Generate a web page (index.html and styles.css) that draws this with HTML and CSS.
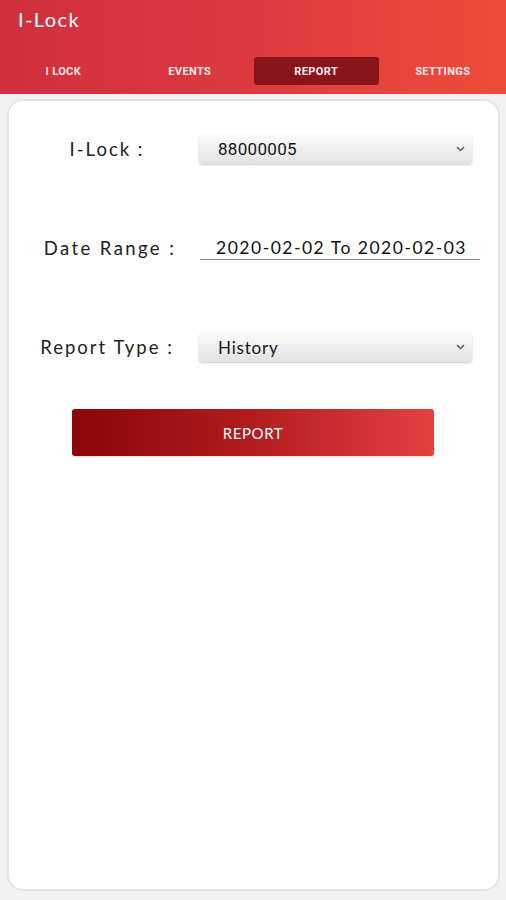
FILE: index.html
```html
<!DOCTYPE html>
<html>
<head>
<meta charset="utf-8">
<link rel="stylesheet" href="styles.css">
</head>
<body>
<header class="appbar">
  <div class="title">I-Lock</div>
  <nav class="tabs">
    <div class="tab">I LOCK</div>
    <div class="tab">EVENTS</div>
    <div class="tab active">REPORT</div>
    <div class="tab">SETTINGS</div>
  </nav>
</header>
<main class="card">
  <div class="row">
    <div class="label">I-Lock :</div>
    <div class="select">
      <span class="value">88000005</span>
      <svg class="chev" width="9" height="6" viewBox="0 0 9 6"><path d="M1 1.2 L4.5 4.5 L8 1.2" fill="none" stroke="#666" stroke-width="1.6"/></svg>
    </div>
  </div>
  <div class="row">
    <div class="label">Date Range :</div>
    <div class="date">2020-02-02 To 2020-02-03</div>
  </div>
  <div class="row">
    <div class="label">Report Type :</div>
    <div class="select">
      <span class="value geo">History</span>
      <svg class="chev" width="9" height="6" viewBox="0 0 9 6"><path d="M1 1.2 L4.5 4.5 L8 1.2" fill="none" stroke="#666" stroke-width="1.6"/></svg>
    </div>
  </div>
  <div class="btnwrap">
    <button class="btn">REPORT</button>
  </div>
</main>
</body>
</html>
```
FILE: styles.css
```css
html, body {
  margin: 0;
  padding: 0;
  height: 100%;
}
body {
  background: #f2f2f2;
  display: flex;
  flex-direction: column;
  font-family: "Lato", "DejaVu Sans", sans-serif;
}
.appbar {
  height: 94px;
  flex: none;
  background: linear-gradient(90deg, #cf2f3d 0%, #dd3a40 50%, #ef4c3b 100%);
  display: flex;
  flex-direction: column;
  box-sizing: border-box;
}
.title {
  color: #fff;
  font-size: 20px;
  padding: 7px 0 0 18px;
  height: 57px;
  box-sizing: border-box;
  letter-spacing: 1.4px;
}
.tabs {
  display: grid;
  grid-template-columns: repeat(4, 1fr);
  height: 28px;
}
.tab {
  font-family: "Roboto", sans-serif;
  font-weight: 700;
  font-size: 11px;
  letter-spacing: 0.4px;
  color: #fbeaea;
  display: flex;
  align-items: center;
  justify-content: center;
  border-radius: 3px;
}
.tab.active {
  background: #89151a;
  margin: 0 1px;
}
.card {
  flex: 1;
  margin: 5px 6px 9px 7px;
  background: #fff;
  border: 2px solid #e4e4e4;
  border-radius: 16px;
  padding-top: 33px;
  box-sizing: border-box;
}
.row {
  display: flex;
  align-items: center;
  height: 30px;
  margin-bottom: 69px;
}
.row:nth-child(3) {
  margin-bottom: 47px;
}
.label {
  width: 184px;
  padding-left: 6px;
  text-align: center;
  font-size: 18.5px;
  color: #222;
  letter-spacing: 2px;
  flex: none;
  white-space: nowrap;
}
.row:nth-child(2) .label {
  letter-spacing: 2.4px;
  padding-left: 12px;
  width: 178px;
}
.select {
  width: 273px;
  height: 29px;
  box-sizing: border-box;
  background: linear-gradient(180deg, #fbfbfb 0%, #ececec 60%, #e2e2e2 100%);
  border-radius: 3px;
  box-shadow: 0 1px 2px rgba(0,0,0,0.22);
  display: flex;
  align-items: center;
  justify-content: space-between;
  padding: 0 7px 0 19px;
}
.value {
  font-family: "Roboto", sans-serif;
  font-size: 17px;
  color: #151515;
  letter-spacing: 0.3px;
}
.value.geo {
  font-family: "Lato", sans-serif;
  letter-spacing: 0.8px;
}
.chev {
  display: block;
}
.date {
  width: 280px;
  margin-left: 1px;
  box-sizing: border-box;
  border-bottom: 1px solid #8a8a8a;
  font-family: "Lato", sans-serif;
  font-size: 17.5px;
  color: #111;
  text-align: right;
  padding: 0 13px 1px 0;
  letter-spacing: 1.5px;
  white-space: nowrap;
}
.btnwrap {
  padding-left: 63px;
}
.btn {
  width: 362px;
  height: 47px;
  border: none;
  border-radius: 3px;
  background: linear-gradient(90deg, #8c0505 0%, #b31c1f 50%, #e54141 100%);
  color: #fff;
  font-family: "Lato", sans-serif;
  font-size: 15px;
  letter-spacing: 0.6px;
  box-shadow: 0 1px 2px rgba(0,0,0,0.15);
  padding: 0;
}
```
